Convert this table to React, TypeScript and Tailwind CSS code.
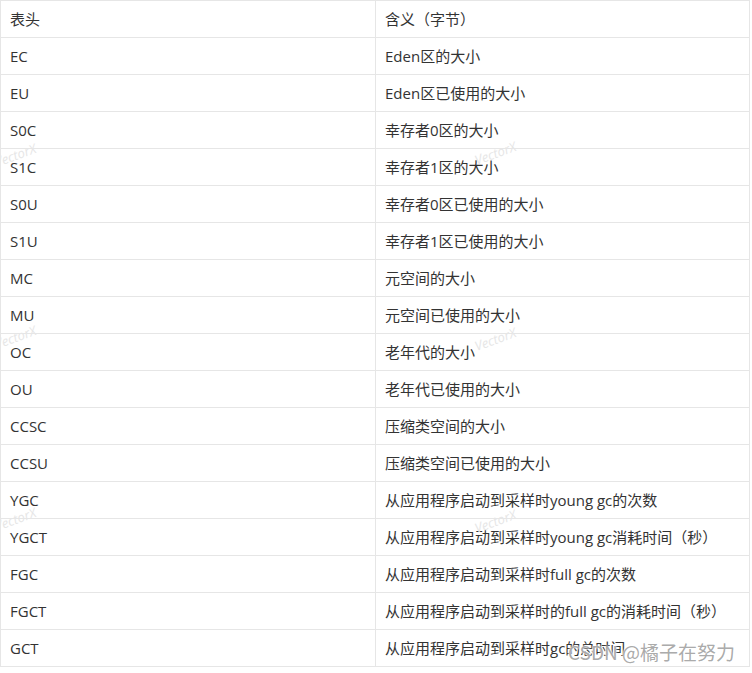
const rows: [string, string][] = [
  ['EC', 'Eden区的大小'],
  ['EU', 'Eden区已使用的大小'],
  ['S0C', '幸存者0区的大小'],
  ['S1C', '幸存者1区的大小'],
  ['S0U', '幸存者0区已使用的大小'],
  ['S1U', '幸存者1区已使用的大小'],
  ['MC', '元空间的大小'],
  ['MU', '元空间已使用的大小'],
  ['OC', '老年代的大小'],
  ['OU', '老年代已使用的大小'],
  ['CCSC', '压缩类空间的大小'],
  ['CCSU', '压缩类空间已使用的大小'],
  ['YGC', '从应用程序启动到采样时young gc的次数'],
  ['YGCT', '从应用程序启动到采样时young gc消耗时间（秒）'],
  ['FGC', '从应用程序启动到采样时full gc的次数'],
  ['FGCT', '从应用程序启动到采样时的full gc的消耗时间（秒）'],
  ['GCT', '从应用程序启动到采样时gc的总时间'],
];

// faint "VectorX" marks sitting over the table
const marks = [
  { left: -6, top: 146 },
  { left: 474, top: 144 },
  { left: -6, top: 328 },
  { left: 474, top: 330 },
  { left: -6, top: 510 },
  { left: 474, top: 512 },
];

export default function App() {
  return (
    <div
      className="relative w-[752px] h-[673px] bg-white text-[15px] text-[#333]"
      style={{ fontFamily: '"Open Sans", "Noto Sans CJK SC", sans-serif' }}
    >
      <div className="w-[750px] border-l border-t border-[#e6e6e6]">
        <div className="flex">
          <div className="w-[375px] h-[37px] flex items-center pl-[9px] border-r border-b border-[#e6e6e6]">表头</div>
          <div className="w-[374px] h-[37px] flex items-center pl-[9px] border-r border-b border-[#e6e6e6]">含义（字节）</div>
        </div>
        {rows.map(([k, v]) => (
          <div key={k} className="flex">
            <div className="w-[375px] h-[37px] flex items-center pl-[9px] border-r border-b border-[#e6e6e6]">{k}</div>
            <div className="w-[374px] h-[37px] flex items-center pl-[9px] border-r border-b border-[#e6e6e6]">{v}</div>
          </div>
        ))}
      </div>

      {marks.map((m, i) => (
        <span
          key={i}
          className="absolute text-[13px] italic text-[#e6e6e6] -rotate-[20deg] pointer-events-none"
          style={{ left: m.left, top: m.top }}
        >
          VectorX
        </span>
      ))}

      <span
        className="absolute left-[568px] top-[638px] text-[19px] text-[#a0a0a0]/90 pointer-events-none [text-shadow:0_0_2px_#fff,0_0_2px_#fff]"
        style={{ fontFamily: '"Noto Sans CJK SC", sans-serif' }}
      >
        CSDN @橘子在努力
      </span>
    </div>
  );
}
